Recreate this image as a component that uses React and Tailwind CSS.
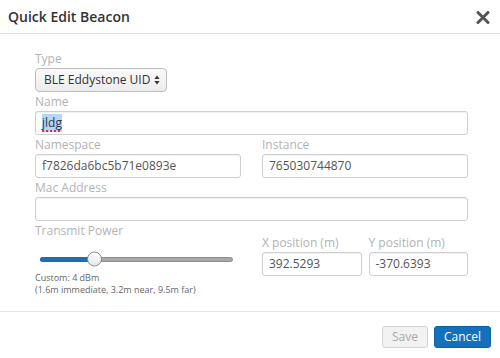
import React from 'react';

// Poziv: modal "Quick Edit Beacon"
const font = { fontFamily: '"Open Sans", "Liberation Sans", sans-serif' };

function Label({ children, className = '' }) {
    return (
        <div className={`h-[19px] text-[12px] leading-[19px] text-[#b3b3b3] ${className}`}>{children}</div>
    );
}

function Field({ value, className = '' }) {
    return (
        <div className={`flex h-[24px] items-center rounded-[3px] border border-[#cfcfcf] bg-white px-[6px] text-[12px] text-[#555] shadow-[inset_0_1px_1px_rgba(0,0,0,0.06)] ${className}`}>
            {value}
        </div>
    );
}

export default function App() {
    return (
        <div style={font} className="h-[358px] w-[500px] overflow-hidden bg-white">
            {/* Zaglavlje */}
            <div className="flex h-[34px] items-center justify-between border-b border-[#e3e3e3] pl-[8px] pr-[10px]">
                <h1 className="text-[14px] font-semibold text-[#333]">Quick Edit Beacon</h1>
                <svg width="14" height="13" viewBox="0 0 14 13" className="mt-[1px]">
                    <path d="M2 1.5 L12 11.5 M12 1.5 L2 11.5" stroke="#555" strokeWidth="3" strokeLinecap="round" />
                </svg>
            </div>

            {/* Tijelo */}
            <div className="pl-[35px] pr-[32px] pt-[15px] pb-[15px]">
                <Label>Type</Label>
                <div className="flex h-[24px] w-[132px] items-center justify-between rounded-[4px] border border-[#bdbdbd] bg-gradient-to-b from-[#fafafa] to-[#ececec] pl-[8px] pr-[6px] text-[12px] text-[#333]">
                    <span>BLE Eddystone UID</span>
                    <svg width="6" height="10" viewBox="0 0 6 10">
                        <path d="M3 0.5 L5.6 4 L0.4 4 Z M3 9.5 L5.6 6 L0.4 6 Z" fill="#333" />
                    </svg>
                </div>

                <Label>Name</Label>
                <Field
                    value={
                        <span className="bg-[#b4d5fe] text-[#333] underline decoration-dotted decoration-[#e0302a] decoration-[1.5px] underline-offset-[3px]">
                            jldg
                        </span>
                    }
                />

                <div className="grid grid-cols-2 gap-x-[21px]">
                    <div>
                        <Label>Namespace</Label>
                        <Field value="f7826da6bc5b71e0893e" />
                    </div>
                    <div>
                        <Label>Instance</Label>
                        <Field value="765030744870" />
                    </div>
                </div>

                <Label>Mac Address</Label>
                <Field value="" />

                <div className="grid grid-cols-2 gap-x-[21px]">
                    {/* Snaga odašiljanja */}
                    <div>
                        <Label>Transmit Power</Label>
                        <div className="mt-[12px] flex h-[14px] items-center pl-[5px] pr-[8px]">
                            <div className="relative h-[5px] w-full rounded-full border border-[#8f8f8f] bg-[#a8a8a8]">
                                <div className="absolute inset-y-[-1px] left-[-1px] w-[54px] rounded-l-full bg-[#1f6db3]" />
                                <div className="absolute left-[46px] top-1/2 h-[15px] w-[15px] -translate-y-1/2 rounded-full border border-[#8a8a8a] bg-gradient-to-b from-white to-[#e6e6e6]" />
                            </div>
                        </div>
                        <div className="mt-[6px] text-[9px] leading-[12px] text-[#666]">
                            <div>Custom: 4 dBm</div>
                            <div>(1.6m immediate, 3.2m near, 9.5m far)</div>
                        </div>
                    </div>

                    {/* Pozicija */}
                    <div className="mt-[12px] grid grid-cols-2 gap-x-[7px]">
                        <div>
                            <Label>X position (m)</Label>
                            <Field value="392.5293" />
                        </div>
                        <div>
                            <Label>Y position (m)</Label>
                            <Field value="-370.6393" />
                        </div>
                    </div>
                </div>
            </div>

            {/* Podnožje */}
            <div className="flex justify-end gap-[6px] border-t border-[#e3e3e3] pr-[9px] pt-[14px]">
                <button className="h-[22px] w-[46px] rounded-[3px] border border-[#d5d5d5] bg-[#f2f2f2] text-[12px] text-[#aaa]">
                    Save
                </button>
                <button className="h-[22px] w-[57px] rounded-[3px] border border-[#0d62a6] bg-[#1570bb] text-[12px] text-white">
                    Cancel
                </button>
            </div>
        </div>
    );
}
